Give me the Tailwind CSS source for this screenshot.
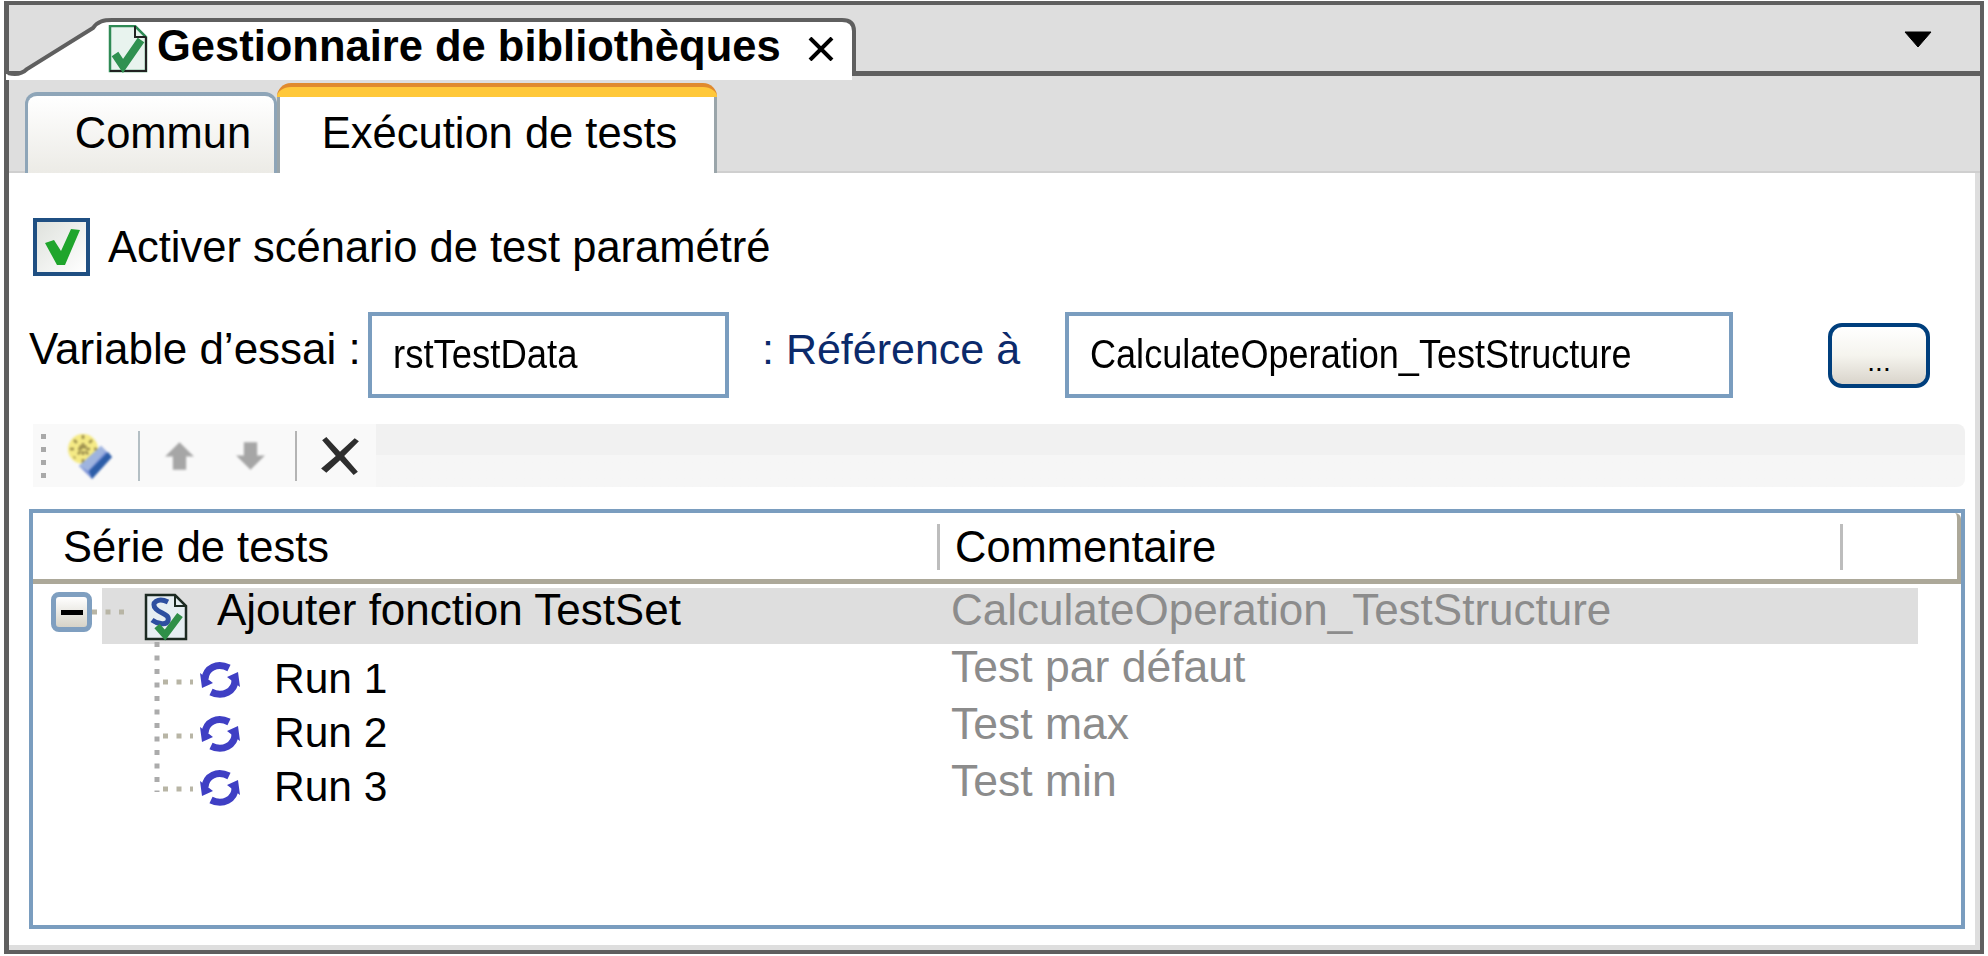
<!DOCTYPE html>
<html lang="fr">
<head>
<meta charset="UTF-8">
<title>Gestionnaire de bibliothèques</title>
<script src="https://cdn.jsdelivr.net/npm/@tailwindcss/browser@4"></script>
</head>
<body class="bg-white font-['Liberation_Sans',Arial,sans-serif] text-black overflow-hidden">
<div class="w-[1988px] h-[956px] pl-[4px] pr-[4px] pt-[1px] pb-[2px]">
  <div class="relative h-full flex flex-col border-[#5f5f5f] border-t-[4px] border-l-[5px] border-r-[4px] border-b-[4px]">

    <!-- document tab strip -->
    <div class="h-[71px] shrink-0 bg-[#dedede] border-b-[5px] border-[#5f5f5f]"></div>
    <svg class="absolute left-[-9px] top-[-5px]" width="880" height="82" viewBox="0 0 880 82">
      <path d="M6 74 C16 76 24 74 30 68 L92 28 C98 21 104 20 112 20 L842 20 C850 20 852 24 852 31 L852 80 L6 80 Z" fill="#fff"/>
      <path d="M8 73 C16 75 22 74 27 69 L93 28 C98 21 104 20 112 20 L842 20 C850 20 854 24 854 31 L854 71 Q854 73 858 73" fill="none" stroke="#5f5f5f" stroke-width="4"/>
    </svg>
    <div class="absolute left-[99px] top-[20px] h-[47px] flex items-center">
      <svg width="40" height="48" viewBox="0 0 40 48" class="blur-[0.5px]">
        <path d="M2 1 H27 L38 12 V46 H2 Z" fill="#e8f3ee" stroke="#2f8a55" stroke-width="2.5"/>
        <path d="M27 1 V12 H38 M38 12 V46 H2" fill="none" stroke="#222" stroke-width="2"/>
        <path d="M7 29 L15 41 L33 15" fill="none" stroke="#2f9150" stroke-width="8"/>
      </svg>
      <span class="ml-[9px] text-[43.5px] leading-none font-bold mt-[-4px] whitespace-nowrap">Gestionnaire de bibliothèques</span>
      <svg width="26" height="24" viewBox="0 0 26 24" class="ml-[27px] mt-[0px]"><path d="M2 1 L24 23 M24 1 L2 23" stroke="#000" stroke-width="4"/></svg>
    </div>
    <svg class="absolute left-[1895px] top-[26px]" width="28" height="17" viewBox="0 0 28 17"><path d="M1 1 H27 L14 16 Z" fill="#000" stroke="#000" stroke-linejoin="round"/></svg>

    <!-- sub tabs -->
    <div class="h-[97px] shrink-0 bg-[#dedede] border-b-[2px] border-[#cfcfcf] pl-[16px] flex items-end">
      <div class="w-[252px] h-[81px] mb-[-2px] rounded-t-[12px] border-t-[4px] border-x-[3px] border-[#8ea5b8] bg-gradient-to-b from-white to-[#ecebe6] flex items-center justify-center">
        <span class="text-[43.5px] leading-none mt-[-1px] ml-[24px]">Commun</span>
      </div>
      <div class="w-[440px] h-[90px] mb-[-2px] rounded-t-[14px] border-t-[4px] border-[#e08a2e] bg-[#ffc83a] pt-[10px]">
        <div class="h-full bg-white border-x-[3px] border-[#9aa5aa] flex items-center justify-center">
          <span class="text-[43.5px] leading-none mt-[-3px] ml-[5px]">Exécution de tests</span>
        </div>
      </div>
    </div>

    <!-- tab content -->
    <div class="flex-1 min-h-0 bg-white border-r-[5px] border-b-[5px] border-[#dedede] pl-[20px] pr-[10px] pt-[45px] flex flex-col">

      <div class="h-[58px] flex items-center ml-[4px]">
        <div class="w-[57px] h-[58px] border-[4px] border-[#1f4f82] bg-gradient-to-br from-[#dfe2dd] to-white flex items-center justify-center">
          <svg width="36" height="38" viewBox="0 0 36 38"><path d="M1 15 L10 12 L17 23 L27 1 L36 2 L21 37 L13 37 Z" fill="#1fa52c"/></svg>
        </div>
        <span class="ml-[18px] text-[43.5px] leading-none mt-[2px] whitespace-nowrap">Activer scénario de test paramétré</span>
      </div>

      <div class="mt-[36px] h-[86px] flex">
        <div class="w-[339px] text-[44px] leading-none pt-[15px] whitespace-nowrap">Variable d’essai :</div>
        <div class="w-[361px] h-[86px] border-[4px] border-[#7a9dbf] pl-[21px] flex items-center overflow-hidden">
          <span class="text-[41px] leading-none mt-[-2px] inline-block origin-left scale-x-[0.89] whitespace-nowrap">rstTestData</span>
        </div>
        <div class="ml-[33px] w-[303px] text-[43px] leading-none pt-[16px] text-[#0b2a6b] whitespace-nowrap">: Référence à</div>
        <div class="w-[668px] h-[86px] border-[4px] border-[#7a9dbf] pl-[21px] flex items-center overflow-hidden">
          <span class="text-[41px] leading-none mt-[-2px] inline-block origin-left scale-x-[0.88] whitespace-nowrap">CalculateOperation_TestStructure</span>
        </div>
        <div class="ml-[95px] mt-[11px] w-[102px] h-[65px] rounded-[14px] border-[4px] border-[#003f7d] bg-gradient-to-b from-white via-[#f5f4ee] to-[#d9d4cb] flex items-end justify-center pb-[8px]">
          <span class="text-[28px] leading-none">...</span>
        </div>
      </div>

      <!-- toolbar -->
      <div class="mt-[26px] h-[63px] ml-[4px] rounded-[8px] bg-gradient-to-b from-[#f1f1f1] from-50% to-[#f6f6f6] to-50% flex">
        <div class="w-[343px] h-full bg-[#f9f9f9] relative flex items-center">
          <div class="ml-[8px] flex flex-col gap-[8px]">
            <span class="block w-[5px] h-[5px] bg-[#a9a9a9]"></span>
            <span class="block w-[5px] h-[5px] bg-[#a9a9a9]"></span>
            <span class="block w-[5px] h-[5px] bg-[#a9a9a9]"></span>
            <span class="block w-[5px] h-[5px] bg-[#a9a9a9]"></span>
          </div>
          <svg width="44" height="46" viewBox="0 0 44 46" class="ml-[22px] blur-[0.8px]">
            <circle cx="15" cy="16" r="15" fill="#f5ea85"/>
            <path d="M15 2 V30 M2 16 H29 M6 7 L24 25 M24 7 L6 25" stroke="#9a8d4c" stroke-width="2.5" stroke-dasharray="4 4"/>
            <path d="M33 13 L44 24 L24 46 L11 33 Z" fill="#7c92d6"/>
            <path d="M44 24 L24 46 L21 38 L40 19 Z" fill="#2c5da8"/>
            <path d="M11 33 L33 13 L38 18 L20 38 Z" fill="#9fb4df"/>
          </svg>
          <span class="ml-[26px] w-[2px] h-[50px] bg-[#b4bfc4]"></span>
          <svg width="31" height="30" viewBox="0 0 28 27" class="ml-[24px] blur-[0.8px]"><path d="M14 1 L27 14 H20 V26 H8 V14 H1 Z" fill="#a6a6a6"/></svg>
          <svg width="31" height="30" viewBox="0 0 28 27" class="ml-[40px] blur-[0.8px]"><path d="M14 26 L27 13 H20 V1 H8 V13 H1 Z" fill="#a6a6a6"/></svg>
          <span class="ml-[29px] w-[2px] h-[50px] bg-[#b4b4b4]"></span>
          <svg width="42" height="40" viewBox="0 0 40 38" class="ml-[22px] blur-[0.6px]"><path d="M3 4 L7 1 L20 15 L34 2 L38 5 L24 19 L37 34 L33 37 L20 23 L7 35 L2 31 L16 19 Z" fill="#2e2e2e"/></svg>
        </div>
      </div>

      <!-- test table -->
      <div class="mt-[22px] h-[420px] border-[4px] border-[#7a9dbf] flex flex-col">
        <div class="h-[71px] shrink-0 flex items-center border-b-[5px] border-r-[4px] border-[#aca899] rounded-tr-[6px]">
          <span class="ml-[30px] w-[874px] text-[43.5px] leading-none mt-[4px] whitespace-nowrap">Série de tests</span>
          <span class="w-[3px] h-[46px] bg-[#bdbdbd] mt-[2px]"></span>
          <span class="ml-[15px] w-[885px] text-[43.5px] leading-none mt-[4px] whitespace-nowrap">Commentaire</span>
          <span class="w-[3px] h-[46px] bg-[#bdbdbd] mt-[2px]"></span>
        </div>
        <div class="relative flex-1 min-h-0">
          <div class="flex mt-[4px] ml-[18px]">
            <div class="mt-[4px] w-[41px] h-[40px] rounded-[8px] border-[5px] border-[#7f9fc0] bg-gradient-to-b from-white to-[#d6d3c8] flex items-center justify-center">
              <span class="block w-[22px] h-[5px] bg-black"></span>
            </div>
            <div class="ml-[10px] w-[1816px] h-[56px] bg-[#dedede] flex items-center">
              <svg width="44" height="48" viewBox="0 0 44 48" class="ml-[42px] mt-[2px] blur-[0.5px]">
                <path d="M2 2 H31 L42 13 V46 H2 Z" fill="#e6eef2" stroke="#1c2a22" stroke-width="2.5"/>
                <path d="M31 2 V13 H42" fill="none" stroke="#1c2a22" stroke-width="2"/>
                <path d="M24 9 C14 4 6 10 12 16 C17 21 26 21 24 28 C22 33 12 30 8 27" fill="none" stroke="#2d4fa0" stroke-width="5"/>
                <path d="M13 33 L21 42 L36 22" fill="none" stroke="#2f8f48" stroke-width="7"/>
              </svg>
              <span class="ml-[29px] w-[734px] text-[44px] leading-none mt-[-12px] whitespace-nowrap">Ajouter fonction TestSet</span>
              <span class="text-[44px] leading-none mt-[-12px] text-[#8c8c8c] whitespace-nowrap">CalculateOperation_TestStructure</span>
            </div>
          </div>
          <div class="flex">
            <div class="ml-[165px] w-[753px] mt-[13px] flex flex-col gap-[9px]">
              <div class="h-[45px] flex items-center">
                <svg width="44" height="42" viewBox="0 0 44 42" class="blur-[0.5px]"><path d="M7 20 C8 9 19 3 31 9 M37 21 C37 32 25 39 13 33" fill="none" stroke="#3f3fc4" stroke-width="7"/><path d="M2 14 L15 24 L4 29 Z M42 28 L29 18 L40 13 Z" fill="#3f3fc4"/></svg>
                <span class="ml-[32px] text-[42.5px] leading-none">Run 1</span>
              </div>
              <div class="h-[45px] flex items-center">
                <svg width="44" height="42" viewBox="0 0 44 42" class="blur-[0.5px]"><path d="M7 20 C8 9 19 3 31 9 M37 21 C37 32 25 39 13 33" fill="none" stroke="#3f3fc4" stroke-width="7"/><path d="M2 14 L15 24 L4 29 Z M42 28 L29 18 L40 13 Z" fill="#3f3fc4"/></svg>
                <span class="ml-[32px] text-[42.5px] leading-none">Run 2</span>
              </div>
              <div class="h-[45px] flex items-center">
                <svg width="44" height="42" viewBox="0 0 44 42" class="blur-[0.5px]"><path d="M7 20 C8 9 19 3 31 9 M37 21 C37 32 25 39 13 33" fill="none" stroke="#3f3fc4" stroke-width="7"/><path d="M2 14 L15 24 L4 29 Z M42 28 L29 18 L40 13 Z" fill="#3f3fc4"/></svg>
                <span class="ml-[32px] text-[42.5px] leading-none">Run 3</span>
              </div>
            </div>
            <div class="flex flex-col gap-[15px] text-[44.5px] leading-[42px] text-[#8c8c8c] mt-[2px]">
              <span>Test par défaut</span>
              <span>Test max</span>
              <span>Test min</span>
            </div>
          </div>
          <!-- tree connectors lie over the selected row -->
          <svg class="absolute left-[0px] top-[0px] z-10" width="200" height="220" viewBox="0 0 200 220">
            <path d="M124 58 V208" stroke="#ababab" stroke-width="5" stroke-dasharray="5 8.5" fill="none"/>
            <path d="M59 28 H96" stroke="#b8b5a5" stroke-width="5" stroke-dasharray="5 8.5" fill="none"/>
            <path d="M130 98 H160 M130 152 H160 M130 205 H160" stroke="#b8b5a5" stroke-width="5" stroke-dasharray="5 8.5" fill="none"/>
          </svg>
        </div>
      </div>
    </div>
  </div>
</div>
</body>
</html>
